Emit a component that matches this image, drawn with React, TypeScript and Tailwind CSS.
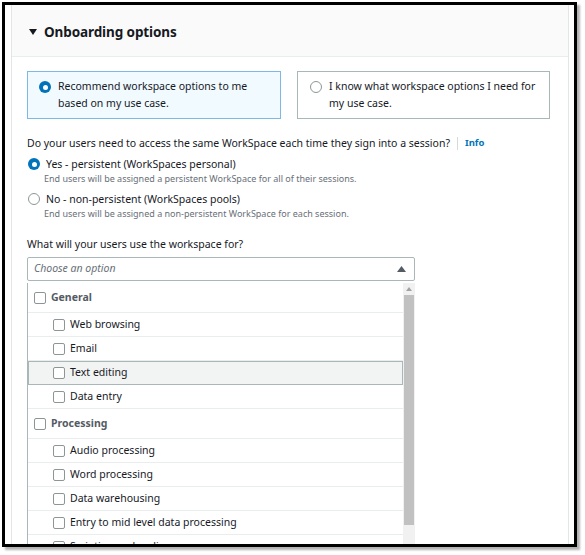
import React from 'react';

const groups = [
  { title: 'General', items: ['Web browsing', 'Email', 'Text editing', 'Data entry'] },
  {
    title: 'Processing',
    items: ['Audio processing', 'Word processing', 'Data warehousing', 'Entry to mid level data processing', 'Scripting and coding'],
  },
];

const Box: React.FC = () => (
  <span className="block w-[12px] h-[12px] rounded-[2px] border border-[#8d9696] bg-white shrink-0" />
);

const Radio: React.FC<{ on?: boolean }> = ({ on }) =>
  on ? (
    <span className="w-[12px] h-[12px] rounded-full bg-[#0073bb] flex items-center justify-center shrink-0">
      <span className="block w-[5px] h-[5px] rounded-full bg-white" />
    </span>
  ) : (
    <span className="block w-[12px] h-[12px] rounded-full border border-[#8d9696] bg-white shrink-0" />
  );

export default function App() {
  return (
    <div className="w-[585px] h-[555px] bg-white pt-[2px] pl-[2px] text-[#16191f]" style={{ fontFamily: '"Noto Sans", "Open Sans", sans-serif' }}>
      <div className="w-[575px] h-[545px] border-[3px] border-black bg-white overflow-hidden shadow-[3px_3px_2px_rgba(0,0,0,0.3)] pl-[6px] pr-[5px]">
        <div className="h-full border-x border-[#e3e6e6]">
          <div className="h-[52px] bg-[#fafafa] border-b border-[#eaeded] flex items-center pl-[17px] pt-[3px] gap-[7px]">
            <svg width="8" height="6" viewBox="0 0 8 6">
              <path d="M0 0 L8 0 L4 6 Z" fill="#16191f" />
            </svg>
            <span className="text-[13.5px] font-bold tracking-[-0.1px]">Onboarding options</span>
          </div>

          <div className="pl-[15px] pt-[14px]">
            <div className="flex gap-[16px] text-[10.5px] leading-[17px]">
              <div className="w-[254px] h-[48px] bg-[#f1faff] border border-[#7fb8e0] flex items-start gap-[7px] pl-[11px] pt-[6px]">
                <span className="flex mt-[3px]"><Radio on /></span>
                <span>Recommend workspace options to me<br />based on my use case.</span>
              </div>
              <div className="w-[253px] h-[48px] border border-[#aab7b8] flex items-start gap-[7px] pl-[12px] pt-[6px]">
                <span className="flex mt-[3px]"><Radio /></span>
                <span>I know what workspace options I need for<br />my use case.</span>
              </div>
            </div>

            <div className="mt-[16px] flex items-center text-[10.5px] leading-[16px]">
              <span>Do your users need to access the same WorkSpace each time they sign into a session?</span>
              <span className="w-px h-[13px] bg-[#d5dbdb] ml-[7px] mr-[7px]" />
              <span className="text-[#0073bb] font-bold text-[9.5px]">Info</span>
            </div>

            <div className="mt-[5px] flex flex-col gap-[5px]">
              <div className="flex flex-col">
                <div className="flex items-center gap-[6px] text-[10.5px] leading-[16px] pl-[1px]">
                  <Radio on />
                  <span>Yes - persistent (WorkSpaces personal)</span>
                </div>
                <span className="pl-[17px] text-[9px] leading-[14px] text-[#687078]">
                  End users will be assigned a persistent WorkSpace for all of their sessions.
                </span>
              </div>
              <div className="flex flex-col">
                <div className="flex items-center gap-[6px] text-[10.5px] leading-[16px] pl-[1px]">
                  <Radio />
                  <span>No - non-persistent (WorkSpaces pools)</span>
                </div>
                <span className="pl-[17px] text-[9px] leading-[14px] text-[#687078]">
                  End users will be assigned a non-persistent WorkSpace for each session.
                </span>
              </div>
            </div>

            <div className="mt-[15px] text-[10.5px] leading-[16px]">What will your users use the workspace for?</div>

            <div className="mt-[5px] w-[388px] h-[24px] border border-[#aab7b8] rounded-[2px] flex items-center justify-between pl-[6px] pr-[8px]">
              <span className="italic text-[10.5px] text-[#687078]">Choose an option</span>
              <svg width="9" height="6" viewBox="0 0 9 6">
                <path d="M4.5 0 L9 6 L0 6 Z" fill="#545b64" />
              </svg>
            </div>

            <div className="mt-[2px] w-[388px] border-l border-[#aab7b8] flex">
              <div className="flex-1 text-[10.5px]">
                {groups.map((g) => (
                  <div key={g.title}>
                    <div className="h-[30px] flex items-center gap-[5px] pl-[6px] border-b border-[#eaeded] font-bold text-[#545b64]">
                      <Box />
                      <span>{g.title}</span>
                    </div>
                    {g.items.map((it) => (
                      <div
                        key={it}
                        className={`h-[24px] flex items-center gap-[5px] ${
                          it === 'Text editing' ? 'bg-[#f2f3f3] border border-[#aab7b8] pl-[24px]' : 'border-b border-[#eaeded] pl-[25px]'
                        }`}
                      >
                        <Box />
                        <span>{it}</span>
                      </div>
                    ))}
                  </div>
                ))}
              </div>
              <div className="w-[12px] bg-[#f1f1f1] flex flex-col items-center">
                <svg width="6" height="4" viewBox="0 0 6 4" className="mt-[4px]">
                  <path d="M3 0 L6 4 L0 4 Z" fill="#a3a3a3" />
                </svg>
                <div className="mt-[4px] w-[10px] h-[230px] bg-[#c1c1c1]" />
              </div>
            </div>
          </div>
        </div>
      </div>
    </div>
  );
}
